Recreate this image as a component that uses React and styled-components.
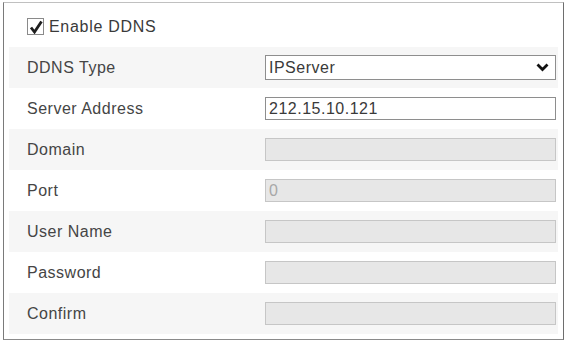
import React from "react";
import styled, { createGlobalStyle } from "styled-components";

const GlobalStyle = createGlobalStyle`
  html, body {
    margin: 0;
    padding: 0;
    background: #ffffff;
  }
  body {
    font-family: "Liberation Sans", Arial, sans-serif;
    color: #333;
  }
`;

const Panel = styled.div`
  box-sizing: border-box;
  width: 561px;
  height: 338px;
  margin: 2px 0 0 3px;
  padding: 3px 5px;
  border: 1px solid #c0c0c0;
  border-left-color: #7a7a7a;
  border-right-color: #6e6e6e;
  border-bottom-color: #8a8a8a;
  background: #fff;
`;

const Row = styled.div`
  display: flex;
  align-items: center;
  height: 41px;
  padding-left: 18px;
  background: ${(p) => (p.$striped ? "#f6f6f6" : "#ffffff")};
`;

const Label = styled.span`
  width: 238px;
  font-size: 16px;
  letter-spacing: 0.5px;
  color: #454545;
`;

const CheckLabel = styled.label`
  display: flex;
  align-items: center;
  gap: 5px;
  font-size: 16px;
  letter-spacing: 0.7px;
  color: #3a3a3a;
`;

const CheckBox = styled.span`
  box-sizing: border-box;
  width: 17px;
  height: 17px;
  border: 1px solid #8a8a8a;
  background: #fff;
  display: flex;
  align-items: center;
  justify-content: center;
`;

const Field = styled.div`
  box-sizing: border-box;
  width: 291px;
  height: ${(p) => (p.$tall ? "25px" : "23px")};
  display: flex;
  align-items: center;
  justify-content: space-between;
  padding: 0 6px 0 3px;
  font-size: 16px;
  letter-spacing: 0.5px;
  border: 1px solid ${(p) => (p.$disabled ? "#c6c6c6" : "#8e8e8e")};
  background: ${(p) => (p.$disabled ? "#e7e7e7" : "#ffffff")};
  color: ${(p) => (p.$disabled ? "#a8a8a8" : "#3a3a3a")};
`;

const rows = [
  { label: "DDNS Type", kind: "select", value: "IPServer" },
  { label: "Server Address", kind: "input", value: "212.15.10.121" },
  { label: "Domain", kind: "disabled", value: "" },
  { label: "Port", kind: "disabled", value: "0" },
  { label: "User Name", kind: "disabled", value: "" },
  { label: "Password", kind: "disabled", value: "" },
  { label: "Confirm", kind: "disabled", value: "" },
];

const Chevron = () => (
  <svg width="13" height="9" viewBox="0 0 13 9">
    <path d="M1.5 1.5 L6.5 6.5 L11.5 1.5" fill="none" stroke="#111" strokeWidth="2.8" />
  </svg>
);

export default function App() {
  return (
    <>
      <GlobalStyle />
      <Panel>
        <Row>
          <CheckLabel>
            <CheckBox>
              <svg width="14" height="14" viewBox="0 0 14 14">
                <path d="M2 7.5 L5.5 12 L12.5 1.5" fill="none" stroke="#1e1e1e" strokeWidth="2.8" />
              </svg>
            </CheckBox>
            Enable DDNS
          </CheckLabel>
        </Row>
        {rows.map((r, i) => (
          <Row key={r.label} $striped={i % 2 === 0}>
            <Label>{r.label}</Label>
            <Field $tall={r.kind === "select"} $disabled={r.kind === "disabled"}>
              <span>{r.value}</span>
              {r.kind === "select" && <Chevron />}
            </Field>
          </Row>
        ))}
      </Panel>
    </>
  );
}
